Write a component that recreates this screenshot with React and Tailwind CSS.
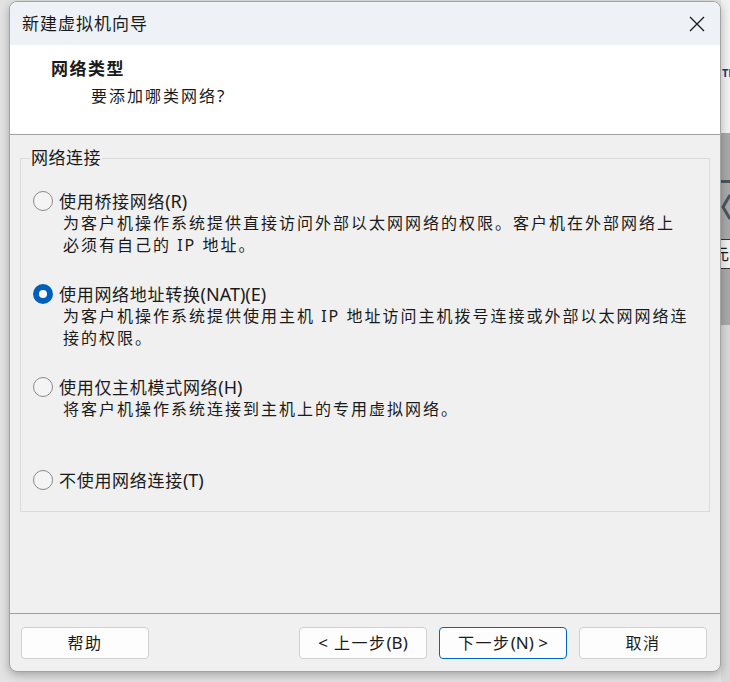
import React from "react";

const options = [
  {
    label: "使用桥接网络",
    key: "(R)",
    desc: ["为客户机操作系统提供直接访问外部以太网网络的权限。客户机在外部网络上", "必须有自己的 IP 地址。"],
  },
  {
    label: "使用网络地址转换",
    key: "(NAT)(E)",
    desc: ["为客户机操作系统提供使用主机 IP 地址访问主机拨号连接或外部以太网网络连", "接的权限。"],
    checked: true,
  },
  {
    label: "使用仅主机模式网络",
    key: "(H)",
    desc: ["将客户机操作系统连接到主机上的专用虚拟网络。"],
  },
  {
    label: "不使用网络连接",
    key: "(T)",
    desc: [],
  },
];

const Radio = ({ checked }) =>
  checked ? (
    <span className="w-[20px] h-[20px] rounded-full bg-[#005fb8] flex items-center justify-center shrink-0">
      <span className="w-[8px] h-[8px] rounded-full bg-white" />
    </span>
  ) : (
    <span className="w-[20px] h-[20px] rounded-full border border-[#8a8a8a] bg-[#f4f4f4] shrink-0" />
  );

const Button = ({ children, primary }) => (
  <button
    className={`w-[128px] h-[32px] rounded-[4px] bg-[#fdfdfd] text-[16px] tracking-[1.5px] text-[#1b1b1b] flex items-center justify-center ${
      primary ? "border border-[#0067c0]" : "border border-[#d0d0d0]"
    }`}
  >
    {children}
  </button>
);

export default function App() {
  return (
    <div
      className="w-[730px] h-[682px] bg-[#e3e3e3] flex overflow-hidden text-[#1a1a1a]"
      style={{ fontFamily: '"Noto Sans", "Noto Sans CJK SC", sans-serif' }}
    >
      <div className="w-[9px] shrink-0" />

      {/* dialog */}
      <div className="mt-[1px] w-[712px] h-[671px] shrink-0 rounded-[8px] border border-[#a3a3a3] bg-[#f0f0f0] flex flex-col overflow-hidden shadow-[0_3px_10px_rgba(0,0,0,0.28)] z-10">
        <div className="h-[43px] bg-[#eef2f6] flex items-center justify-between pl-[12px] pr-[15px]">
          <span className="text-[17px] tracking-[1px]">新建虚拟机向导</span>
          <svg width="16" height="16" viewBox="0 0 16 16" className="text-[#1a1a1a]">
            <path d="M1 1 L15 15 M15 1 L1 15" stroke="currentColor" strokeWidth="1.3" fill="none" />
          </svg>
        </div>

        <div className="h-[89px] bg-white border-b border-[#a0a0a0] box-content flex flex-col">
          <div className="pl-[41px] pt-[13px] text-[17px] font-bold tracking-[1.5px] leading-[22px]">网络类型</div>
          <div className="pl-[81px] pt-[5px] text-[16px] tracking-[2px] leading-[22px]">
            要添加哪类网络<span className="text-[17px] tracking-normal">?</span>
          </div>
        </div>

        <div className="h-[478px] pt-[23px] px-[10px]">
          <div className="relative h-[354px] border border-[#dadada]">
            <span className="absolute left-[9px] -top-[11px] px-[1px] bg-[#f0f0f0] text-[17px] leading-[20px] tracking-[0.5px]">
              网络连接
            </span>
            <div className="pt-[31px] pl-[12px] flex flex-col">
              {options.map((o) => (
                <div key={o.label} className="h-[93px] flex flex-col">
                  <div className="h-[22px] flex items-center gap-[6px]">
                    <Radio checked={o.checked} />
                    <span className="text-[17px] leading-[22px] tracking-[0.7px]">
                      {o.label}
                      <span className="text-[18px] tracking-normal">{o.key}</span>
                    </span>
                  </div>
                  {o.desc.map((d) => (
                    <div key={d} className="pl-[30px] text-[16px] leading-[22px] tracking-[2px] whitespace-nowrap">
                      {d}
                    </div>
                  ))}
                </div>
              ))}
            </div>
          </div>
        </div>

        <div className="border-t border-[#a0a0a0] pt-[13px] pl-[11px] pr-[13px] flex">
          <Button>帮助</Button>
          <div className="flex-1" />
          <div className="flex gap-[12px]">
            <Button>
              <span className="text-[17px] tracking-normal mr-[6px]">&lt;</span>上一步
              <span className="text-[17px] tracking-normal">(B)</span>
            </Button>
            <Button primary>
              下一步<span className="text-[17px] tracking-normal">(N) &gt;</span>
            </Button>
            <Button>取消</Button>
          </div>
        </div>
      </div>

      {/* window behind, right edge */}
      <div className="w-[9px] shrink-0 flex flex-col overflow-hidden">
        <div className="h-[133px] shrink-0 bg-[#f1f1f1] pt-[67px] pl-[1px] overflow-hidden">
          <span className="block w-[8px] overflow-hidden text-[11px] font-bold text-[#1d3a78] leading-none whitespace-nowrap">
            TM
          </span>
        </div>
        <div className="h-[192px] shrink-0 bg-[#a9a9a9] flex flex-col pt-[47px]">
          <div className="h-[3px] bg-[#4b5560]" />
          <svg width="9" height="36" viewBox="0 0 9 36" className="mt-[10px]">
            <path d="M9 2 L2 14 L9 26" stroke="#4b5560" strokeWidth="3" fill="none" />
          </svg>
          <div className="mt-[10px] h-[30px] w-[9px] overflow-hidden bg-[#f0f0f0] border-y border-[#333]">
            <span className="block text-[16px] leading-[28px] -ml-[8px]">元</span>
          </div>
        </div>
        <div className="flex-1 bg-[#d8d8d8]" />
      </div>
    </div>
  );
}
